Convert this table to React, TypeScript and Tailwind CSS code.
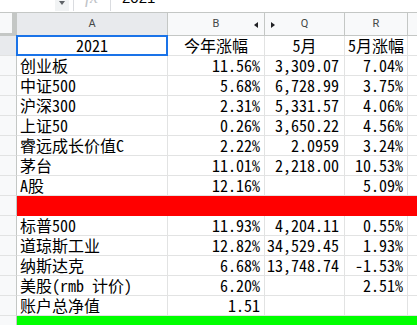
import React from "react";

type Row = { kind: "data"; cells: string[] } | { kind: "fill"; color: string };

const rows: Row[] = [
  { kind: "data", cells: ["创业板", "11.56%", "3,309.07", "7.04%"] },
  { kind: "data", cells: ["中证500", "5.68%", "6,728.99", "3.75%"] },
  { kind: "data", cells: ["沪深300", "2.31%", "5,331.57", "4.06%"] },
  { kind: "data", cells: ["上证50", "0.26%", "3,650.22", "4.56%"] },
  { kind: "data", cells: ["睿远成长价值C", "2.22%", "2.0959", "3.24%"] },
  { kind: "data", cells: ["茅台", "11.01%", "2,218.00", "10.53%"] },
  { kind: "data", cells: ["A股", "12.16%", "", "5.09%"] },
  { kind: "fill", color: "red" },
  { kind: "data", cells: ["标普500", "11.93%", "4,204.11", "0.55%"] },
  { kind: "data", cells: ["道琼斯工业", "12.82%", "34,529.45", "1.93%"] },
  { kind: "data", cells: ["纳斯达克", "6.68%", "13,748.74", "-1.53%"] },
  { kind: "data", cells: ["美股(rmb 计价)", "6.20%", "", "2.51%"] },
  { kind: "data", cells: ["账户总净值", "1.51", "", ""] },
  { kind: "fill", color: "green" },
];

const font = {
  fontFamily:
    "'Noto Sans Mono CJK SC', 'Noto Sans CJK SC', 'Liberation Mono', monospace",
};

const cols = "grid grid-cols-[17px_151px_97px_80px_63px_1fr]";

function RowHeader({ selected }: { selected?: boolean }) {
  return (
    <div
      className={`h-[20px] border-r border-b border-r-[#c4c7c5] border-b-[#e2e3e3] ${
        selected ? "bg-[#e8eaed]" : "bg-[#f8f9fa]"
      }`}
    />
  );
}

export default function App() {
  return (
    <div className="w-[417px] h-[325px] overflow-hidden bg-white text-black select-none">
      {/* formula bar */}
      <div className="h-[13px] border-b border-[#c4c7c5] flex items-start relative overflow-hidden">
        <div className="ml-[55px] w-[14px] h-[11px] bg-[#f1f3f4] flex justify-center">
          <div className="mt-[1px] w-0 h-0 border-l-[3px] border-r-[3px] border-t-[4px] border-l-transparent border-r-transparent border-t-[#5f6368]" />
        </div>
        <div className="ml-[4px] w-px h-[11px] bg-[#dadce0]" />
        <div
          className="ml-[11px] mt-[-12px] text-[18px] leading-[18px] italic text-[#c0c4c8]"
          style={{ fontFamily: "'Liberation Serif', serif" }}
        >
          fx
        </div>
        <div className="ml-[12px] w-px h-[11px] bg-[#dadce0]" />
        <div
          className="ml-[11px] mt-[-10px] text-[15px] leading-[16px] text-black"
          style={{ fontFamily: "'Liberation Sans', Arial, sans-serif" }}
        >
          2021
        </div>
      </div>

      {/* column header row */}
      <div
        className={`${cols} h-[23px] text-[11px] text-[#444746]`}
        style={{ fontFamily: "Roboto, 'Liberation Sans', sans-serif" }}
      >
        <div className="bg-[#c4c7c5] relative">
          <div className="w-[12px] h-[20px] bg-[#f8f9fa]" />
        </div>
        <div className="bg-[#e8eaed] border-r border-b border-[#c4c7c5] flex items-center justify-center">
          A
        </div>
        <div className="bg-[#f8f9fa] border-r border-b border-[#c4c7c5] flex items-center justify-center relative">
          B
          <div className="absolute right-[6px] top-[9px] w-0 h-0 border-t-[3px] border-b-[3px] border-r-[4px] border-t-transparent border-b-transparent border-r-[#202124]" />
        </div>
        <div className="bg-[#f8f9fa] border-r border-b border-[#c4c7c5] flex items-center justify-center relative">
          Q
          <div className="absolute left-[6px] top-[9px] w-0 h-0 border-t-[3px] border-b-[3px] border-l-[4px] border-t-transparent border-b-transparent border-l-[#202124]" />
        </div>
        <div className="bg-[#f8f9fa] border-r border-b border-[#c4c7c5] flex items-center justify-center">
          R
        </div>
        <div className="bg-[#f8f9fa] border-b border-[#c4c7c5]" />
      </div>

      {/* first row (selected) */}
      <div className={`${cols} text-[16px] leading-[19px]`} style={font}>
        <RowHeader selected />
        <div className="relative h-[20px] border-r border-b border-[#e2e3e3] flex items-center justify-center">
          2021
          <div className="absolute left-[-1px] top-[-1px] right-[-1px] bottom-[-1px] border-2 border-[#1a73e8]" />
        </div>
        <div className="h-[20px] border-r border-b border-[#e2e3e3] flex items-center justify-center">
          今年涨幅
        </div>
        <div className="h-[20px] border-r border-b border-[#e2e3e3] flex items-center justify-center">
          5月
        </div>
        <div className="h-[20px] border-r border-b border-[#e2e3e3] flex items-center justify-center whitespace-nowrap overflow-hidden">
          5月涨幅
        </div>
        <div className="h-[20px] border-b border-[#e2e3e3]" />
      </div>

      {rows.map((r, i) =>
        r.kind === "fill" ? (
          <div key={i} className={`${cols}`}>
            <RowHeader />
            <div
              className={`col-span-5 h-[20px] ${
                r.color === "red" ? "bg-[#ff0000]" : "bg-[#00ff00]"
              }`}
            />
          </div>
        ) : (
          <div key={i} className={`${cols} text-[16px] leading-[19px]`} style={font}>
            <RowHeader />
            <div className="h-[20px] border-r border-b border-[#e2e3e3] flex items-center pl-[3px] whitespace-nowrap overflow-hidden">
              {r.cells[0]}
            </div>
            <div className="h-[20px] border-r border-b border-[#e2e3e3] flex items-center justify-end pr-[4px] whitespace-nowrap">
              {r.cells[1]}
            </div>
            <div className="h-[20px] border-r border-b border-[#e2e3e3] flex items-center justify-end pr-[5px] whitespace-nowrap">
              {r.cells[2]}
            </div>
            <div className="h-[20px] border-r border-b border-[#e2e3e3] flex items-center justify-end pr-[4px] whitespace-nowrap">
              {r.cells[3]}
            </div>
            <div className="h-[20px] border-b border-[#e2e3e3]" />
          </div>
        )
      )}
    </div>
  );
}
